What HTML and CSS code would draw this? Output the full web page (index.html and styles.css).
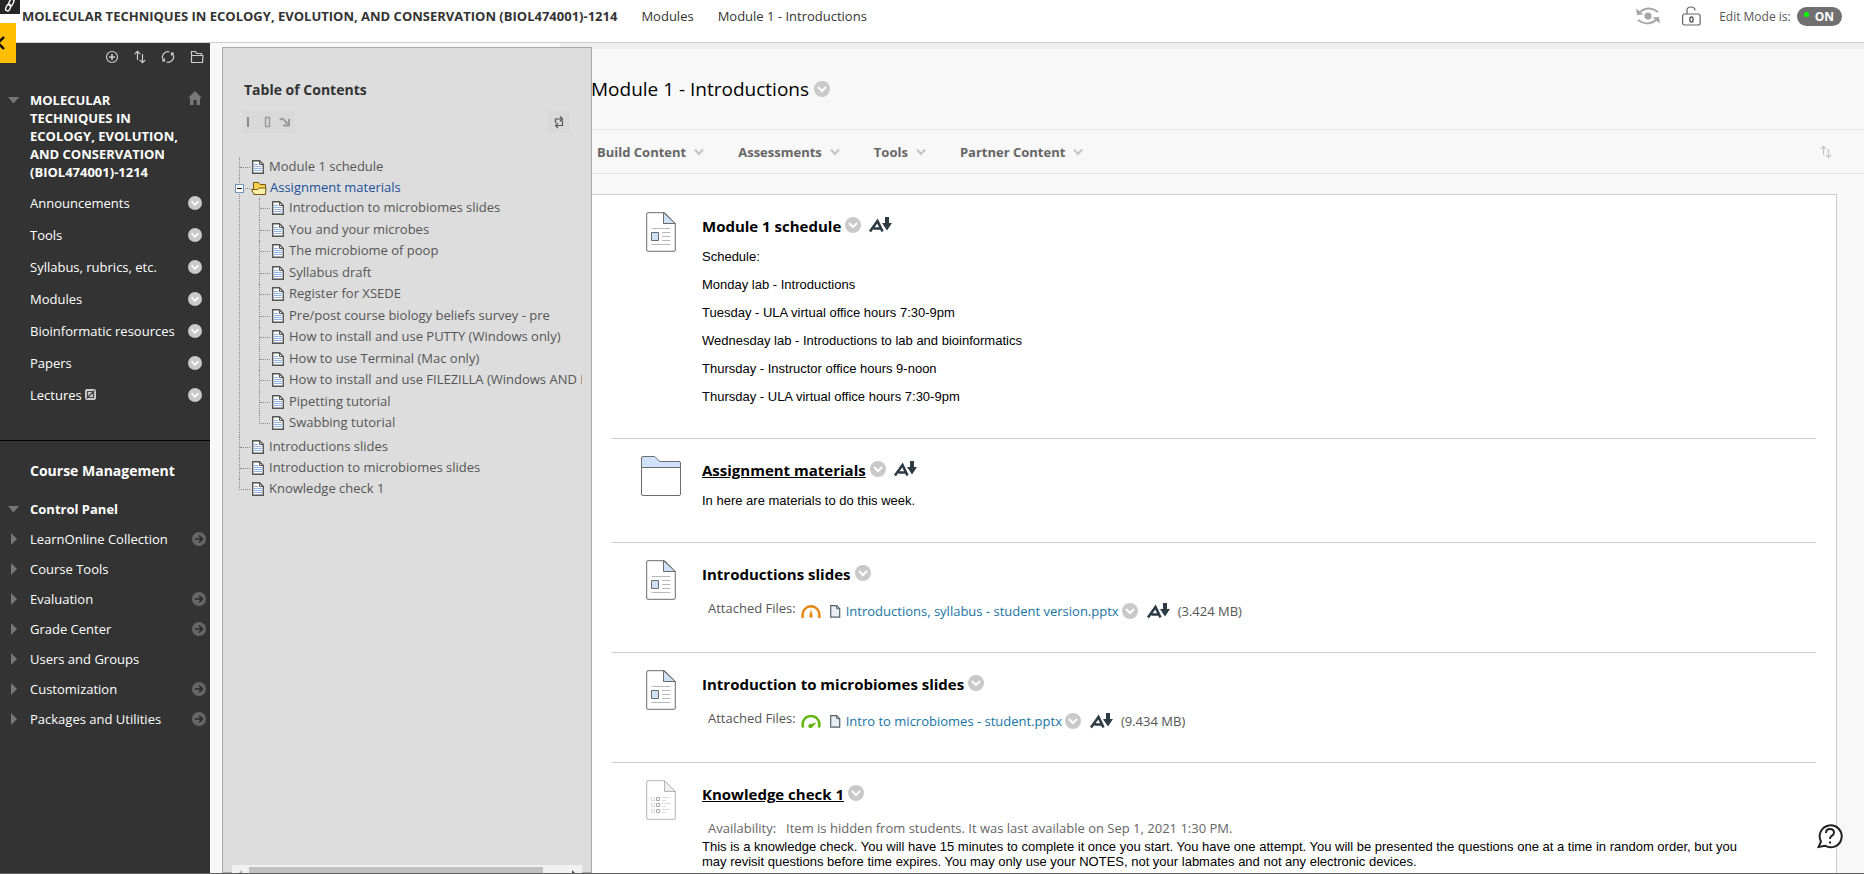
FILE: index.html
```html
<!DOCTYPE html>
<html lang="en">
<head>
    <meta charset="UTF-8">
    <meta name="viewport" content="width=device-width, initial-scale=1.0">
    <title>Module 1 - Introductions</title>
    <link rel="stylesheet" href="styles.css">
</head>
<body>

<!-- shared icons -->
<svg class="sprite" aria-hidden="true">
    <symbol id="chevron" viewBox="0 0 16 16">
        <circle cx="8" cy="8" r="8" fill="#c9c9c9"/>
        <path d="M4 6l4 4 4-4" fill="none" stroke="#fff" stroke-width="2"/>
    </symbol>
    <symbol id="caret" viewBox="0 0 10 8">
        <path d="M1 1.5l4 4.5 4-4.5" fill="none" stroke="#c4c4c4" stroke-width="2"/>
    </symbol>
    <symbol id="go" viewBox="0 0 14 14">
        <circle cx="7" cy="7" r="7" fill="#666"/>
        <path d="M3 7h7M7 3.5L10.5 7 7 10.5" fill="none" stroke="#2b2b2b" stroke-width="1.6"/>
    </symbol>
    <symbol id="sort" viewBox="0 0 12 14">
        <path d="M3.5 10V1.5M.7 4.2l2.8-2.8 2.8 2.8M8.5 4v8.5M5.7 9.8l2.8 2.8 2.8-2.8" fill="none" stroke="currentColor" stroke-width="1.2"/>
    </symbol>
    <symbol id="doc" viewBox="0 0 12 14">
        <path d="M.7.7h6.8l3.8 3.8v8.8H.7z" fill="#fff" stroke="#555" stroke-width="1.4"/>
        <path d="M7.5.7v3.8h3.8" fill="none" stroke="#555"/>
        <path d="M2 4.5h4M2 6.5h8M2 8.5h8M2 10.5h8" stroke="#8fb4e3"/>
    </symbol>
    <symbol id="item" viewBox="0 0 30 40">
        <path d="M2 .7h16.5L29.3 11.5V38q0 1.300-1.300 1.300H2Q.7 39.300.7 38V2Q.7.7 2 .7z" fill="#fff" stroke="#6b6b6b"/>
        <path d="M17.5.7v10.8h11.8z" fill="#cfe1f7" stroke="#6b6b6b"/>
        <path d="M5.5 16.5h19M16 20.5h8.5M16 24.5h8.5M16 28.5h8.5M5.5 32.5h19" stroke="#b9b9b9"/>
        <path d="M5.5 20.5h7v8h-7z" fill="#cfe1f7" stroke="#6b6b6b"/>
    </symbol>
    <symbol id="alt" viewBox="0 0 24 16">
        <path d="M2 14.5L9.500 4l5 10.500M5.500 11.500h8" fill="none" stroke="#2d3b45" stroke-width="2.600"/>
        <path d="M17 0h4v6h3l-5 7.500L14 6h3z" fill="#2d3b45"/>
    </symbol>
    <symbol id="file" viewBox="0 0 11 13">
        <path d="M.7.7h6l3 3v8.500h-9z" fill="#e9eef2" stroke="#56636d" stroke-width="1.200"/>
        <path d="M6.700.7v3h3" fill="none" stroke="#56636d"/>
    </symbol>
</svg>

<header class="topbar">
    <a class="course" href="#">MOLECULAR TECHNIQUES IN ECOLOGY, EVOLUTION, AND CONSERVATION (BIOL474001)-1214</a>
    <a href="#">Modules</a>
    <a href="#">Module 1 - Introductions</a>
    <div class="tools">
        <button class="preview" aria-label="Student preview">
            <svg width="24" height="18" viewBox="0 0 24 18"><circle cx="12" cy="9" r="3.600" fill="#a6a6a6"/><path d="M2 6.500Q12-2.500 22 5M2 13Q12 20.500 22 11.500" fill="none" stroke="#a6a6a6" stroke-width="2"/><path d="M0 1.500l1 6.500 6.500-.5zM24 16.500L23 10l-6.500.5z" fill="#a6a6a6"/></svg>
        </button>
        <button class="lock" aria-label="Locked items: 0">
            <svg width="19" height="20" viewBox="0 0 19 20"><rect x=".6" y="8" width="17.500" height="11" rx="2" fill="none" stroke="#666" stroke-width="1.200"/><path d="M5 8V4.500Q5 1 9 1t4 3.500" fill="none" stroke="#666" stroke-width="1.200"/><ellipse cx="9.500" cy="13.500" rx="1.600" ry="2.600" fill="none" stroke="#444" stroke-width="1.200"/></svg>
        </button>
        <label for="editMode">Edit Mode is:</label>
        <button id="editMode" class="toggle"><span class="dot"></span>ON</button>
    </div>
</header>
<button class="link-badge" aria-label="Copy link">
    <svg width="14" height="14" viewBox="0 0 14 14"><g fill="none" stroke="#fff" stroke-width="1.400"><rect x="6" y="-1" width="4" height="7" rx="2" transform="rotate(25 8 3)"/><rect x="3" y="4" width="4" height="7" rx="2" transform="rotate(25 5 8)"/></g></svg>
</button>
<button class="side-tab" aria-label="Collapse">
    <svg width="6" height="14" viewBox="0 0 6 14"><path d="M4 1L-2 7l6 6" fill="none" stroke="#000" stroke-width="2.400"/></svg>
</button>

<div class="page">
    <nav class="sidebar">
        <div class="side-tools">
            <button aria-label="Add"><svg width="14" height="14" viewBox="0 0 14 14"><circle cx="7" cy="7" r="5.500" fill="none" stroke="#ccc" stroke-width="1.200"/><path d="M7 4v6M4 7h6" stroke="#ccc" stroke-width="1.600"/></svg></button>
            <button aria-label="Reorder"><svg width="12" height="14"><use href="#sort"/></svg></button>
            <button aria-label="Refresh"><svg width="14" height="14" viewBox="0 0 14 14"><path d="M2.800 10.500A5.300 5.300 0 0 1 8.500 2M11.200 3.500A5.300 5.300 0 0 1 5.500 12M1 11h2.500V8.500M13 3h-2.500v2.500" fill="none" stroke="#ccc" stroke-width="1.200"/></svg></button>
            <button aria-label="Folder view"><svg width="14" height="14" viewBox="0 0 14 14"><path d="M1.500 12.500v-11h4l1 2h5v2h1.500l-.5 7zM1.500 5.500h11" fill="none" stroke="#ccc" stroke-width="1.200"/></svg></button>
        </div>
        <div class="side-title">
            <span class="tri-down"></span>
            <a href="#">MOLECULAR TECHNIQUES IN ECOLOGY, EVOLUTION, AND CONSERVATION (BIOL474001)-1214</a>
            <svg class="home" width="14" height="14" viewBox="0 0 14 14"><path d="M7 0l7 7h-2v7H8.500V9h-3v5H2V7H0z" fill="#777"/></svg>
        </div>
        <ul class="menu">
            <li><a href="#">Announcements</a><svg width="14" height="14"><use href="#chevron"/></svg></li>
            <li><a href="#">Tools</a><svg width="14" height="14"><use href="#chevron"/></svg></li>
            <li><a href="#">Syllabus, rubrics, etc.</a><svg width="14" height="14"><use href="#chevron"/></svg></li>
            <li><a href="#">Modules</a><svg width="14" height="14"><use href="#chevron"/></svg></li>
            <li><a href="#">Bioinformatic resources</a><svg width="14" height="14"><use href="#chevron"/></svg></li>
            <li><a href="#">Papers</a><svg width="14" height="14"><use href="#chevron"/></svg></li>
            <li><a href="#">Lectures <svg class="hidden-mark" width="11" height="11" viewBox="0 0 11 11"><rect width="11" height="11" rx="2" fill="#ccc"/><path d="M2.500 2.500h6v6h-6zM1.500 9.500l8-8" fill="none" stroke="#444" stroke-width="1.200"/></svg></a><svg width="14" height="14"><use href="#chevron"/></svg></li>
        </ul>
        <h3>Course Management</h3>
        <h4><span class="tri-down"></span>Control Panel</h4>
        <ul class="panel">
            <li><a href="#">LearnOnline Collection</a><svg width="14" height="14"><use href="#go"/></svg></li>
            <li><a href="#">Course Tools</a></li>
            <li><a href="#">Evaluation</a><svg width="14" height="14"><use href="#go"/></svg></li>
            <li><a href="#">Grade Center</a><svg width="14" height="14"><use href="#go"/></svg></li>
            <li><a href="#">Users and Groups</a></li>
            <li><a href="#">Customization</a><svg width="14" height="14"><use href="#go"/></svg></li>
            <li><a href="#">Packages and Utilities</a><svg width="14" height="14"><use href="#go"/></svg></li>
        </ul>
    </nav>

    <aside class="toc">
        <h2>Table of Contents</h2>
        <div class="toc-tools">
            <div class="views">
                <button aria-label="Dock left"><svg width="14" height="14" viewBox="0 0 14 14"><path d="M2 2v10" stroke="#888" stroke-width="2"/></svg></button>
                <button aria-label="Dock frame"><svg width="14" height="14" viewBox="0 0 14 14"><path d="M3.500 2.500h4v9h-4z" fill="none" stroke="#999" stroke-width="1.400"/></svg></button>
                <button aria-label="Minimize"><svg width="14" height="14" viewBox="0 0 14 14"><path d="M2 5q2-3 5 1l3 3M11 4v6.500H5" fill="none" stroke="#999" stroke-width="2"/></svg></button>
            </div>
            <button class="reload" aria-label="Refresh contents"><svg width="12" height="14" viewBox="0 0 12 14"><path d="M2.500 8V4h6M7 1.500L9.500 4 7 6.500M9.500 5.500v5h-6M5 8l-2.500 2.500L5 13" fill="none" stroke="#555" stroke-width="1.200"/></svg></button>
        </div>
        <ul class="tree">
            <li><a class="node" href="#"><svg width="12" height="14"><use href="#doc"/></svg>Module 1 schedule</a></li>
            <li>
                <a class="node open" href="#"><span class="minus"></span><svg width="16" height="14" viewBox="0 0 16 14"><path d="M2.500 13V1.500h5l1.500 2h5.500V13z" fill="#fcd04b" stroke="#6b5617"/><path d="M.5 8.500h6l2-1.500h6.500l-.5 6.500H3z" fill="#fff0a8" stroke="#6b5617"/></svg>Assignment materials</a>
                <ul>
                    <li><a class="node" href="#"><svg width="12" height="14"><use href="#doc"/></svg>Introduction to microbiomes slides</a></li>
                    <li><a class="node" href="#"><svg width="12" height="14"><use href="#doc"/></svg>You and your microbes</a></li>
                    <li><a class="node" href="#"><svg width="12" height="14"><use href="#doc"/></svg>The microbiome of poop</a></li>
                    <li><a class="node" href="#"><svg width="12" height="14"><use href="#doc"/></svg>Syllabus draft</a></li>
                    <li><a class="node" href="#"><svg width="12" height="14"><use href="#doc"/></svg>Register for XSEDE</a></li>
                    <li><a class="node" href="#"><svg width="12" height="14"><use href="#doc"/></svg>Pre/post course biology beliefs survey - pre</a></li>
                    <li><a class="node" href="#"><svg width="12" height="14"><use href="#doc"/></svg>How to install and use PUTTY (Windows only)</a></li>
                    <li><a class="node" href="#"><svg width="12" height="14"><use href="#doc"/></svg>How to use Terminal (Mac only)</a></li>
                    <li><a class="node" href="#"><svg width="12" height="14"><use href="#doc"/></svg>How to install and use FILEZILLA (Windows AND Mac)</a></li>
                    <li><a class="node" href="#"><svg width="12" height="14"><use href="#doc"/></svg>Pipetting tutorial</a></li>
                    <li><a class="node" href="#"><svg width="12" height="14"><use href="#doc"/></svg>Swabbing tutorial</a></li>
                </ul>
            </li>
            <li><a class="node" href="#"><svg width="12" height="14"><use href="#doc"/></svg>Introductions slides</a></li>
            <li><a class="node" href="#"><svg width="12" height="14"><use href="#doc"/></svg>Introduction to microbiomes slides</a></li>
            <li><a class="node" href="#"><svg width="12" height="14"><use href="#doc"/></svg>Knowledge check 1</a></li>
        </ul>
        <div class="hscroll">
            <svg width="17" height="8" viewBox="0 0 17 8"><path d="M10 5v8L6 9z" fill="#a3a3a3"/></svg>
            <span class="thumb"></span>
            <svg width="17" height="8" viewBox="0 0 17 8"><path d="M7 5v8l4-4z" fill="#505050"/></svg>
        </div>
    </aside>

    <main class="content">
        <div class="heading">
            <h1>Module 1 - Introductions</h1>
            <svg width="16" height="16"><use href="#chevron"/></svg>
        </div>
        <div class="actions">
            <button>Build Content <svg width="10" height="8"><use href="#caret"/></svg></button>
            <button>Assessments <svg width="10" height="8"><use href="#caret"/></svg></button>
            <button>Tools <svg width="10" height="8"><use href="#caret"/></svg></button>
            <button>Partner Content <svg width="10" height="8"><use href="#caret"/></svg></button>
            <button class="reorder" aria-label="Reorder"><svg width="12" height="14"><use href="#sort"/></svg></button>
        </div>
        <ul class="items">
            <li>
                <div class="icon"><svg width="30" height="40"><use href="#item"/></svg></div>
                <div class="body">
                    <h3>Module 1 schedule<svg width="16" height="16"><use href="#chevron"/></svg><svg class="alt" width="24" height="16"><use href="#alt"/></svg></h3>
                    <p>Schedule:</p>
                    <p>Monday lab - Introductions</p>
                    <p>Tuesday - ULA virtual office hours 7:30-9pm</p>
                    <p>Wednesday lab - Introductions to lab and bioinformatics</p>
                    <p>Thursday - Instructor office hours 9-noon</p>
                    <p>Thursday - ULA virtual office hours 7:30-9pm</p>
                </div>
            </li>
            <li>
                <div class="icon"><svg width="40" height="40" viewBox="0 0 40 40"><path d="M.5 11.500V2Q.5.5 2 .5h11.500L19 5.500h19q1.500 0 1.500 1.500v4.500z" fill="#cfe1fb" stroke="#6b6b6b"/><path d="M.5 11.500h39V38q0 1.500-1.500 1.500H2Q.5 39.500.5 38z" fill="#fff" stroke="#6b6b6b"/></svg></div>
                <div class="body">
                    <h3><a href="#">Assignment materials</a><svg width="16" height="16"><use href="#chevron"/></svg><svg class="alt" width="24" height="16"><use href="#alt"/></svg></h3>
                    <p>In here are materials to do this week.</p>
                </div>
            </li>
            <li>
                <div class="icon"><svg width="30" height="40"><use href="#item"/></svg></div>
                <div class="body">
                    <h3>Introductions slides<svg width="16" height="16"><use href="#chevron"/></svg></h3>
                    <div class="files">
                        <span class="label">Attached Files:</span>
                        <svg class="gauge" width="20" height="13" viewBox="0 0 20 13"><path d="M1.600 13V9.700a8.400 8.400 0 0 1 16.800 0V13" fill="none" stroke="#e8830c" stroke-width="2.400"/><path d="M10 3l2 8a2 2 0 0 1-4 0z" fill="#e8830c" stroke="#fff" stroke-width=".6"/></svg>
                        <svg class="file" width="11" height="13"><use href="#file"/></svg>
                        <a href="#">Introductions, syllabus - student version.pptx</a>
                        <svg class="more" width="16" height="16"><use href="#chevron"/></svg>
                        <svg class="alt" width="24" height="16"><use href="#alt"/></svg>
                        <span class="size">(3.424 MB)</span>
                    </div>
                </div>
            </li>
            <li>
                <div class="icon"><svg width="30" height="40"><use href="#item"/></svg></div>
                <div class="body">
                    <h3>Introduction to microbiomes slides<svg width="16" height="16"><use href="#chevron"/></svg></h3>
                    <div class="files">
                        <span class="label">Attached Files:</span>
                        <svg class="gauge" width="20" height="13" viewBox="0 0 20 13"><path d="M2.200 12.500A8.400 8.400 0 1 1 17.800 12.500" fill="none" stroke="#5fb404" stroke-width="2.400"/><path d="M15.500 7.500l-4.500 5a2 2 0 0 1-3-3z" fill="#5fb404"/></svg>
                        <svg class="file" width="11" height="13"><use href="#file"/></svg>
                        <a href="#">Intro to microbiomes - student.pptx</a>
                        <svg class="more" width="16" height="16"><use href="#chevron"/></svg>
                        <svg class="alt" width="24" height="16"><use href="#alt"/></svg>
                        <span class="size">(9.434 MB)</span>
                    </div>
                </div>
            </li>
            <li>
                <div class="icon"><svg width="30" height="40" viewBox="0 0 30 40"><path d="M2 .7h16.500L29.300 11.500V38q0 1.300-1.300 1.300H2Q.7 39.300.7 38V2Q.7.7 2 .7z" fill="#fff" stroke="#b5b5b5"/><path d="M18.500.7v10.800h10.800z" fill="#eee" stroke="#b5b5b5"/><path d="M5.500 17.500h3v3h-3zM5.500 23.500h3v3h-3zM5.500 29.500h3v3h-3z" fill="none" stroke="#ddd"/><path d="M10.500 17.500h3v3h-3zM10.500 23.500h3v3h-3zM10.500 29.500h3v3h-3z" fill="none" stroke="#aaa"/><path d="M16 17.500h8M16 20.500h4M16 23.500h8M16 26.500h4M16 29.500h8M16 32.500h4" stroke="#ddd"/></svg></div>
                <div class="body">
                    <h3><a href="#">Knowledge check 1</a><svg width="16" height="16"><use href="#chevron"/></svg></h3>
                    <div class="availability"><span>Availability:</span><span>Item is hidden from students. It was last available on Sep 1, 2021 1:30 PM.</span></div>
                    <p>This is a knowledge check. You will have 15 minutes to complete it once you start. You have one attempt. You will be presented the questions one at a time in random order, but you may revisit questions before time expires. You may only use your NOTES, not your labmates and not any electronic devices.</p>
                </div>
            </li>
        </ul>
    </main>
</div>
<button class="help" aria-label="Help">
    <svg width="26" height="26" viewBox="0 0 26 26"><path d="M4 18.500A11 11 0 1 1 8 22.700L1.500 24z" fill="#fff" stroke="#222" stroke-width="2"/><path d="M9 10q0-4 4-4t4 3.500q0 2-2 3.200t-2 3.300M13 18.500v2" fill="none" stroke="#222" stroke-width="2"/></svg>
</button>

</body>
</html>
```
FILE: styles.css
```css
* {
    box-sizing: border-box;
}
body {
    margin: 0;
    height: 100vh;
    display: flex;
    flex-direction: column;
    overflow: hidden;
    position: relative;
    font-family: "Open Sans", sans-serif;
    font-size: 13px;
    color: #333;
    background: #f8f8f8;
    border-bottom: 1px solid #606060;
}
h1, h2, h3, h4, ul, p {
    margin: 0;
    padding: 0;
}
ul {
    list-style: none;
}
a {
    color: inherit;
    text-decoration: none;
}
button {
    padding: 0;
    border: none;
    background: none;
    font: inherit;
    color: inherit;
    cursor: pointer;
}
svg {
    flex: none;
    display: block;
}
.sprite {
    position: absolute;
    width: 0;
    height: 0;
}

/* top bar */
.topbar {
    flex: none;
    display: flex;
    align-items: center;
    gap: 24px;
    height: 43px;
    padding: 0 22px 10px;
    background: #fff;
    border-bottom: 1px solid #ccc;
}
.topbar .course {
    font-weight: bold;
}
.tools {
    display: flex;
    align-items: center;
    margin-left: auto;
    font-size: 12px;
    color: #555;
}
.lock {
    margin: 0 18px 0 22px;
}
.toggle {
    display: flex;
    align-items: center;
    gap: 6px;
    height: 19px;
    margin-left: 6px;
    padding: 0 8px 0 7px;
    border-radius: 10px;
    background: #707070;
    color: #fff;
    font-weight: bold;
}
.dot {
    width: 5px;
    height: 5px;
    margin-bottom: 3px;
    border-radius: 50%;
    background: #0f0;
}
.link-badge {
    position: absolute;
    left: 0;
    top: 0;
    width: 20px;
    height: 14px;
    padding-left: 3px;
    background: #262626;
}
.side-tab {
    position: absolute;
    left: 0;
    top: 23px;
    z-index: 2;
    width: 16px;
    height: 40px;
    background: #ffbf00;
}

.page {
    flex: 1;
    min-height: 0;
    display: flex;
}

/* left menu */
.sidebar {
    flex: none;
    width: 210px;
    background: #333;
    color: #fff;
}
.side-tools {
    display: flex;
    justify-content: flex-end;
    gap: 15px;
    padding: 7px 6px 0 0;
    color: #ccc;
}
.side-title {
    display: flex;
    align-items: flex-start;
    padding: 27px 8px 0 8px;
    font-weight: bold;
    line-height: 18px;
}
.side-title a {
    width: 150px;
    margin-left: 11px;
}
.home {
    margin: 0 0 0 auto;
}
.tri-down {
    width: 11px;
    border: 5px solid transparent;
    border-top: 6px solid #777;
    border-bottom: none;
}
.side-title .tri-down {
    margin-top: 6px;
}
.menu {
    padding: 6px 8px 29px 30px;
    border-bottom: 1px solid #000;
}
.menu li {
    display: flex;
    align-items: center;
    justify-content: space-between;
    height: 32px;
}
.hidden-mark {
    display: inline;
}
.sidebar h3 {
    padding: 20px 0 0 30px;
    font-size: 14px;
    line-height: 20px;
}
.sidebar h4 {
    display: flex;
    align-items: center;
    gap: 11px;
    height: 30px;
    margin-top: 13px;
    padding-left: 8px;
}
.panel li {
    display: flex;
    align-items: center;
    height: 30px;
    padding: 0 4px 0 11px;
}
.panel li::before {
    content: "";
    border: 6px solid transparent;
    border-left-color: #777;
    border-right: none;
    margin-right: 13px;
}
.panel svg {
    margin-left: auto;
}

/* table of contents */
.toc {
    flex: none;
    display: flex;
    flex-direction: column;
    position: relative;
    z-index: 1;
    width: 370px;
    margin: 4px 0 0 12px;
    padding: 32px 9px 0 9px;
    background: #ddd;
    border: 1px solid #a9a9a9;
}
.toc h2 {
    padding-left: 12px;
    font-size: 14px;
    line-height: 20px;
}
.toc-tools {
    display: flex;
    justify-content: space-between;
    padding: 11px 12px 24px 11px;
}
.views, .reload {
    display: flex;
    align-items: center;
    gap: 2px;
    height: 22px;
    padding: 0 3px;
    background: #d9d9d9;
}
.reload {
    padding: 0 5px;
}
.tree {
    overflow: hidden;
    padding-left: 1px;
    color: #555;
}
.tree li {
    margin-left: 6px;
    border-left: 1px dotted #888;
}
.tree ul {
    padding-bottom: 2px;
}
.tree ul li {
    margin-left: 19px;
}
.node {
    display: flex;
    align-items: flex-start;
    height: 21px;
    line-height: 18px;
    white-space: nowrap;
}
.tree ul li:nth-child(odd) .node {
    height: 22px;
}
/* dotted branch from the trunk to the icon */
.node::before {
    content: "";
    flex: none;
    width: 10px;
    height: 10px;
    margin-right: 2px;
    border-bottom: 1px dotted #888;
}
.node svg {
    margin: 3px 5px 0 0;
}
.tree li:last-child {
    border-left-color: transparent;
}
.tree li:last-child > .node::before {
    margin-left: -1px;
    border-left: 1px dotted #888;
}
.node.open {
    position: relative;
    height: 20px;
    color: #1c4f9c;
}
.node.open svg {
    margin: 3px 3px 0 -1px;
}
.minus {
    position: absolute;
    left: -5px;
    top: 6px;
    width: 9px;
    height: 9px;
    border: 1px solid #6f97bd;
    background: linear-gradient(#000, #000) center / 5px 1px no-repeat #fff;
}
.hscroll {
    display: flex;
    height: 8px;
    margin: auto 0 -1px;
    background: #f1f1f1;
}
.thumb {
    width: 84%;
    margin: 2px auto 0 0;
    background: #c1c1c1;
}

/* main column */
.content {
    flex: 1;
    min-width: 0;
    display: flex;
    flex-direction: column;
    margin-left: -32px;
    padding-left: 31px;
    border-top: 6px solid #eee;
}
.heading {
    flex: none;
    display: flex;
    align-items: center;
    gap: 5px;
    height: 80px;
}
h1 {
    font-size: 19px;
    font-weight: normal;
    color: #000;
}
.actions {
    flex: none;
    display: flex;
    align-items: center;
    gap: 34px;
    height: 45px;
    padding: 0 32px 0 6px;
    border-top: 1px solid #e8e8e8;
    border-bottom: 1px solid #e8e8e8;
    font-weight: bold;
    color: #666;
}
.actions button {
    display: flex;
    align-items: center;
    gap: 8px;
}
.actions .reorder {
    margin-left: auto;
    color: #c4c4c4;
}
.items {
    flex: 1;
    margin: 20px 27px 0 0;
    padding: 0 20px;
    background: #fff;
    border: 1px solid #ccc;
    border-bottom: none;
}
.items > li {
    display: flex;
    padding-top: 17px;
    border-bottom: 1px solid #ccc;
}
.items > li:last-child {
    border-bottom: none;
}
.icon {
    flex: none;
    display: flex;
    justify-content: center;
    width: 90px;
    padding-left: 8px;
}
.body {
    padding: 4px 60px 34px 0;
    color: #000;
}
.body h3 {
    display: flex;
    align-items: center;
    gap: 4px;
    height: 20px;
    font-size: 15px;
}
.body h3 a {
    text-decoration: underline;
}
.alt {
    margin-left: 3px;
}
.body h3 svg {
    margin-bottom: 3px;
}
.body p {
    margin-top: 13px;
    font-family: "Liberation Sans", Arial, sans-serif;
    font-size: 13px;
    line-height: 15px;
}
.files {
    display: flex;
    align-items: center;
    height: 20px;
    margin: 17px 0 -3px;
    padding-left: 6px;
    color: #555;
}
.files .label {
    align-self: flex-start;
    line-height: 14px;
}
.files a {
    margin: 0 3px 0 5px;
    color: #1874a4;
}
.gauge {
    margin: 0 9px 0 5px;
}
.files .alt {
    margin: 0 8px;
}
.availability {
    display: flex;
    gap: 10px;
    margin-top: 15px;
    padding-left: 6px;
    line-height: 18px;
    color: #666;
}
.availability + p {
    margin-top: 2px;
}
.help {
    position: absolute;
    right: 21px;
    bottom: 24px;
}
```
